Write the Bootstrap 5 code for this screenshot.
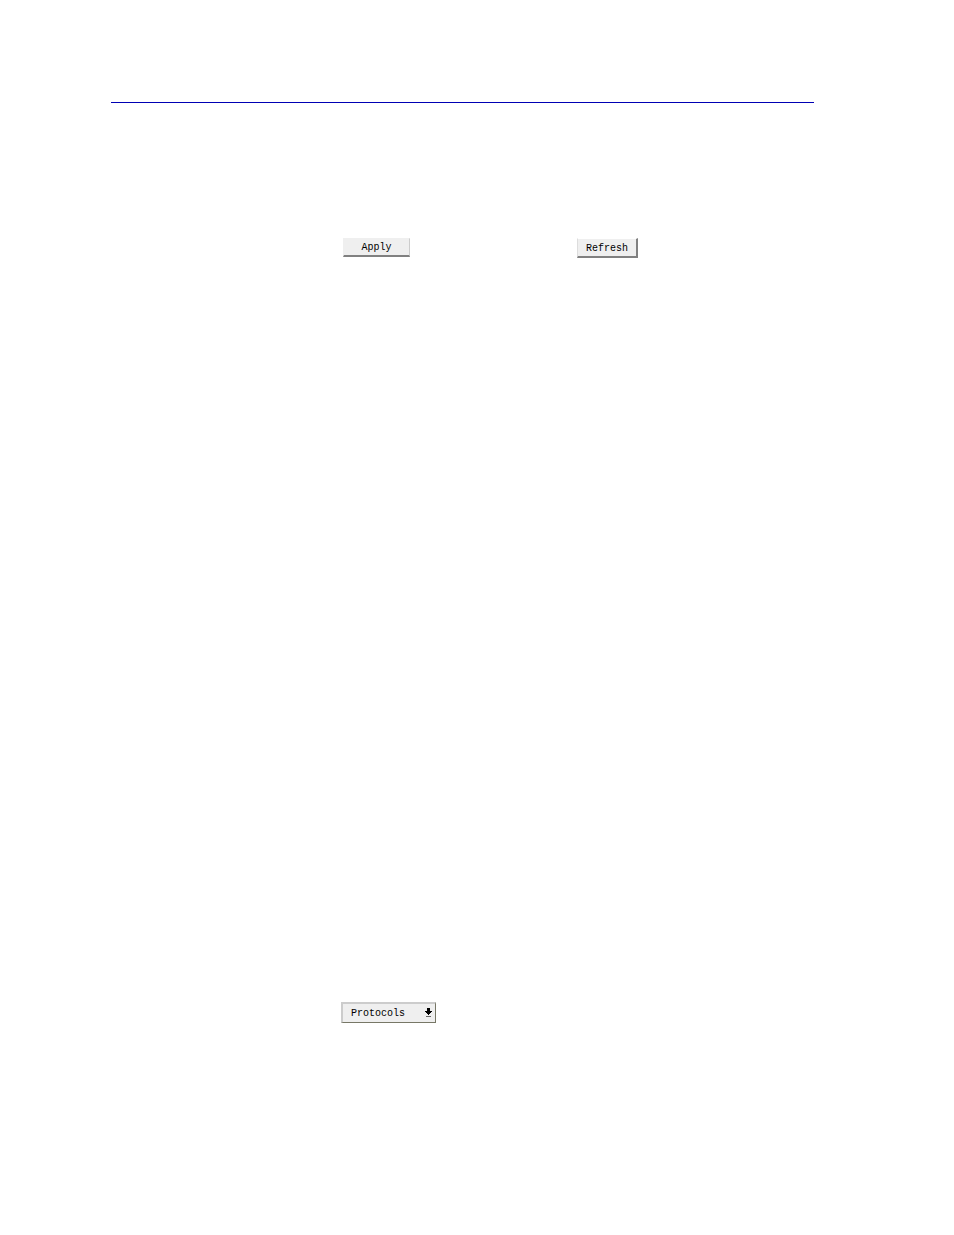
<!DOCTYPE html>
<html lang="en">
<head>
<meta charset="utf-8">
<meta name="viewport" content="width=device-width, initial-scale=1">
<title>Protocols</title>
<link href="https://cdn.jsdelivr.net/npm/bootstrap@5.3.0/dist/css/bootstrap.min.css" rel="stylesheet">
<style>
  body { background: #fff; font-family: "Liberation Mono", monospace; }
  .sheet { padding: 102px 140px 212px 111px; }
  .sheet-rule { border-top: 1px solid #0000b4; }
  .sheet-body { padding-left: 230px; }
  .actions { padding: 135px 0 0 2px; gap: 167px; }
  .tool-btn, .tool-select {
    font: 10px/12px "Liberation Mono", monospace;
    color: #000;
    background: #efefef;
    border-radius: 0;
  }
  .tool-btn {
    padding: 2px 0 1px;
    border: solid;
    border-width: 1px 1px 2px;
    border-color: #efefef #ccc #808080 #efefef;
  }
  .btn-apply { width: 67px; height: 19px; }
  .btn-refresh { width: 61px; height: 20px; padding-top: 3px; border-width: 1px 2px 2px 1px; border-color: #fff #808080 #808080 #ddd; }
  .protocol-box { width: 95px; margin-top: 744px; }
  .tool-select {
    appearance: none;
    width: 100%;
    height: 21px;
    padding: 1px 20px 0 8px;
    border: solid;
    border-width: 2px 1px 1px 2px;
    border-color: #ccc #777766 #777766 #ccc;
  }
  .select-arrow { right: 4px; top: 6px; pointer-events: none; }
</style>
</head>
<body>
<main class="sheet">
  <hr class="sheet-rule m-0 opacity-100">
  <div class="sheet-body">
    <div class="actions d-flex align-items-start">
      <button type="button" class="tool-btn btn-apply">Apply</button>
      <button type="button" class="tool-btn btn-refresh">Refresh</button>
    </div>
    <div class="protocol-box position-relative d-flex">
      <select class="tool-select" aria-label="Protocols">
        <option>Protocols</option>
      </select>
      <svg class="select-arrow position-absolute" width="7" height="10" viewBox="0 0 7 10" shape-rendering="crispEdges" aria-hidden="true">
        <path d="M2 0h3v3h2v1H6v1H5v1H4v1H3V6H2V5H1V4H0V3h2z" fill="#000"/>
        <path d="M1 8h5v1H1z" fill="#666"/>
      </svg>
    </div>
  </div>
</main>
<script src="https://cdn.jsdelivr.net/npm/bootstrap@5.3.0/dist/js/bootstrap.bundle.min.js"></script>
</body>
</html>
